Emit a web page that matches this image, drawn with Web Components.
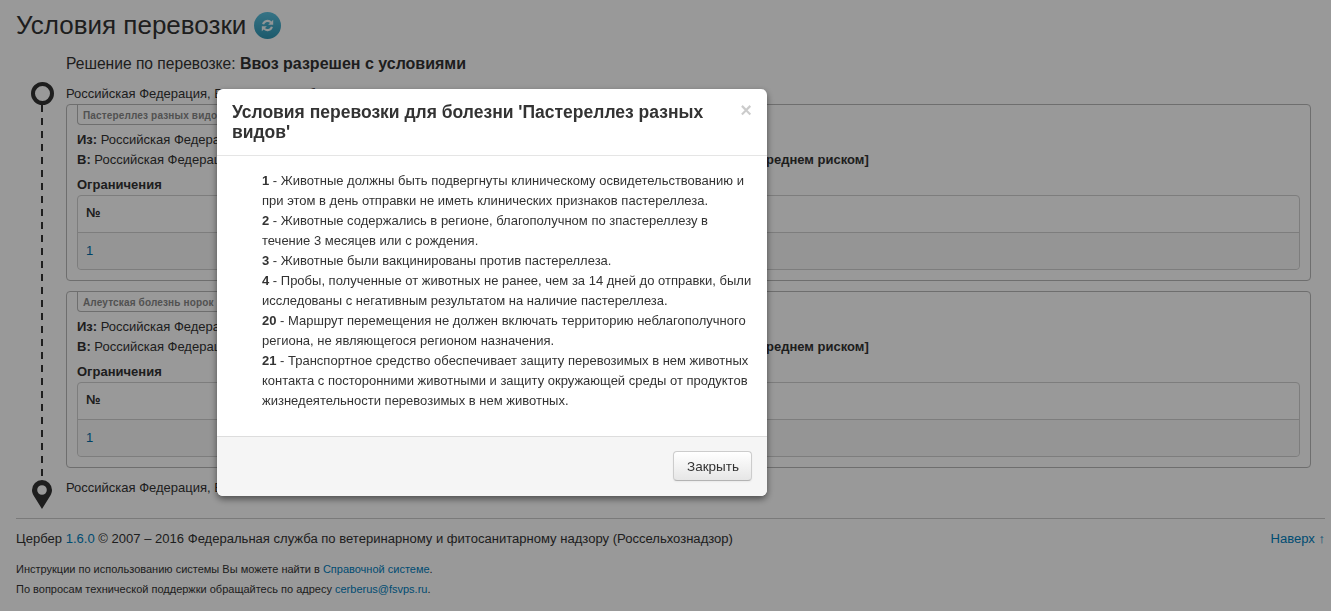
<!DOCTYPE html>
<html lang="ru">
<head>
<meta charset="utf-8">
<title>Условия перевозки</title>
<style>
  html, body { margin: 0; height: 100%; }
  body { font-family: "Liberation Sans", Arial, sans-serif; color: #333; background: #fff; overflow: hidden; }
  b { color: #333; }
  a { color: #0080c0; text-decoration: none; }
  route-decision b { font-size: 16px; }
</style>
</head>
<body>
<cerber-page>
  <page-title>Условия перевозки</page-title>
  <route-decision>Решение по перевозке: <b>Ввоз разрешен с условиями</b></route-decision>
  <route-timeline>
    <route-point slot="start">Российская Федерация, Белгородская область</route-point>
    <route-box title-text="Пастереллез разных видов" tail="реднем риском]"></route-box>
    <route-box title-text="Алеутская болезнь норок" tail="реднем риском]"></route-box>
    <route-point slot="end">Российская Федерация, Белгородская область</route-point>
  </route-timeline>
  <page-footer>
    <span>Цербер <a href="#">1.6.0</a> © 2007 – 2016 Федеральная служба по ветеринарному и фитосанитарному надзору (Россельхознадзор)</span>
    <a slot="top" href="#">Наверх ↑</a>
    <span slot="note">Инструкции по использованию системы Вы можете найти в <a href="#">Справочной системе</a>.</span>
    <span slot="note">По вопросам технической поддержки обращайтесь по адресу <a href="#">cerberus@fsvps.ru</a>.</span>
  </page-footer>
</cerber-page>
<modal-dialog>
  <span slot="title">Условия перевозки для болезни 'Пастереллез разных видов'</span>
  <condition-item><b>1</b> - Животные должны быть подвергнуты клиническому освидетельствованию и при этом в день отправки не иметь клинических признаков пастереллеза.</condition-item>
  <condition-item><b>2</b> - Животные содержались в регионе, благополучном по зпастереллезу в течение 3 месяцев или с рождения.</condition-item>
  <condition-item><b>3</b> - Животные были вакцинированы против пастереллеза.</condition-item>
  <condition-item><b>4</b> - Пробы, полученные от животных не ранее, чем за 14 дней до отправки, были исследованы с негативным результатом на наличие пастереллеза.</condition-item>
  <condition-item><b>20</b> - Маршрут перемещения не должен включать территорию неблагополучного региона, не являющегося регионом назначения.</condition-item>
  <condition-item><b>21</b> - Транспортное средство обеспечивает защиту перевозимых в нем животных контакта с посторонними животными и защиту окружающей среды от продуктов жизнедеятельности перевозимых в нем животных.</condition-item>
</modal-dialog>
<script>
  class CerberPage extends HTMLElement {
    constructor() {
      super();
      this.attachShadow({ mode: "open" }).innerHTML = `
        <style>
          :host { display: block; padding: 0 6px 0 16px; }
        </style>
        <slot></slot>`;
    }
  }

  class PageTitle extends HTMLElement {
    constructor() {
      super();
      this.attachShadow({ mode: "open" }).innerHTML = `
        <style>
          :host { display: flex; align-items: center; gap: 8px; height: 50px; font-size: 26px; color: #333; }
          .refresh { width: 27px; height: 27px; border-radius: 50%; background: linear-gradient(#5bc0de, #2f96b4); display: flex; align-items: center; justify-content: center; }
        </style>
        <span><slot></slot></span>
        <span class="refresh">
          <svg width="13" height="13" viewBox="0 0 16 16" fill="none" stroke="#f2f8fa" stroke-width="2.6">
            <path d="M2.6 6.6A5.6 5.6 0 0 1 12.4 4.4"/>
            <path d="M13.4 9.4A5.6 5.6 0 0 1 3.6 11.6"/>
            <path d="M15 1v6.200H8.800z" fill="#f2f8fa" stroke="none"/>
            <path d="M1 15V8.800h6.200z" fill="#f2f8fa" stroke="none"/>
          </svg>
        </span>`;
    }
  }

  class RouteDecision extends HTMLElement {
    constructor() {
      super();
      this.attachShadow({ mode: "open" }).innerHTML = `
        <style>
          :host { display: block; margin-left: 50px; font-size: 15.600px; line-height: 20px; height: 27px; padding-top: 4px; box-sizing: border-box; }
        </style>
        <slot></slot>`;
    }
  }

  class RouteTimeline extends HTMLElement {
    constructor() {
      super();
      this.attachShadow({ mode: "open" }).innerHTML = `
        <style>
          :host { display: grid; grid-template-columns: 50px 1fr; margin-top: 5px; }
          .rail { display: flex; flex-direction: column; align-items: center; padding-left: 2px; box-sizing: border-box; }
          .ring { width: 23px; height: 23px; box-sizing: border-box; border: 4px solid #333; border-radius: 50%; flex: none; }
          .line { flex: 1; width: 2px; background: repeating-linear-gradient(to bottom, #333 0 7px, transparent 7px 13px); }
          .pin { flex: none; display: block; }
          .content { display: flex; flex-direction: column; gap: 10px; margin-right: 14px; padding: 1px 0 12px; }
          ::slotted([slot="start"]) { margin-bottom: -9px; }
          ::slotted([slot="end"]) { margin-top: -1px; }
        </style>
        <div class="rail">
          <span class="ring"></span>
          <span class="line"></span>
          <svg class="pin" width="20" height="29" viewBox="0 0 20 29">
            <path fill-rule="evenodd" fill="#333" d="M10 0a10 10 0 0 1 10 10c0 2-.6 3.800-1.600 5.400L10 29 1.600 15.400C.6 13.800 0 12 0 10A10 10 0 0 1 10 0zm0 5.200a4.800 4.800 0 1 0 0 9.600 4.800 4.800 0 0 0 0-9.600z"/>
          </svg>
        </div>
        <div class="content">
          <slot name="start"></slot>
          <slot></slot>
          <slot name="end"></slot>
        </div>`;
    }
  }

  class RoutePoint extends HTMLElement {
    constructor() {
      super();
      this.attachShadow({ mode: "open" }).innerHTML = `
        <style>
          :host { display: block; font-size: 13px; line-height: 22px; height: 20px; white-space: nowrap; }
        </style>
        <slot></slot>`;
    }
  }

  const boxTemplate = document.createElement("template");
  boxTemplate.innerHTML = `
    <style>
      :host { display: block; height: 177px; box-sizing: border-box; border: 1px solid #b8b8b8; border-radius: 4px; padding: 0 10px; font-size: 13px; color: #333; }
      .legend { display: inline-block; height: 20px; box-sizing: border-box; border: 1px solid #b8b8b8; border-top: 0; border-radius: 0 0 4px 4px; padding: 0 5px; width: 300px; font-size: 10px; letter-spacing: .15px; font-weight: bold; line-height: 21px; color: #888; vertical-align: top; white-space: nowrap; overflow: hidden; }
      .line { line-height: 22px; height: 20px; white-space: nowrap; }
      .from { margin-top: 4px; }
      .tail { position: absolute; left: 766px; }
      h4 { margin: 5px 0 0; height: 20px; font-size: 13px; line-height: 22px; color: #333; font-weight: bold; }
      .table { margin-top: 1px; border: 1px solid #d0d0d0; border-radius: 4px; height: 75px; box-sizing: border-box; display: grid; grid-template-rows: 36px 1fr; }
      .cell { padding: 0 8px; display: flex; align-items: center; }
      .head { font-weight: bold; padding-bottom: 4px; }
      .row { border-top: 1px solid #d0d0d0; color: #006ea8; background: #f8f8f8; border-radius: 0 0 4px 4px; padding-bottom: 2px; }
    </style>
    <div class="legend"></div>
    <div class="line from"><b>Из:</b> Российская Федерация</div>
    <div class="line"><b>В:</b> Российская Федерация<b class="tail"></b></div>
    <h4>Ограничения</h4>
    <div class="table">
      <div class="cell head">№</div>
      <div class="cell row">1</div>
    </div>`;

  class RouteBox extends HTMLElement {
    constructor() {
      super();
      this.attachShadow({ mode: "open" }).appendChild(boxTemplate.content.cloneNode(true));
      this.shadowRoot.querySelector(".legend").textContent = this.getAttribute("title-text");
      this.shadowRoot.querySelector(".tail").textContent = this.getAttribute("tail");
    }
  }

  class PageFooter extends HTMLElement {
    constructor() {
      super();
      this.attachShadow({ mode: "open" }).innerHTML = `
        <style>
          :host { display: block; margin-top: 9px; border-top: 1px solid #ccc; font-size: 13.050px; }
          .main { display: flex; justify-content: space-between; line-height: 20px; padding-top: 10px; }
          .notes { display: flex; flex-direction: column; margin-top: 10px; font-size: 11px; line-height: 20px; }
        </style>
        <div class="main"><slot></slot><slot name="top"></slot></div>
        <div class="notes"><slot name="note"></slot></div>`;
    }
  }

  class ModalDialog extends HTMLElement {
    constructor() {
      super();
      this.attachShadow({ mode: "open" }).innerHTML = `
        <style>
          :host { position: fixed; inset: 0; background: rgba(0,0,0,.4); display: block; }
          .dialog { position: absolute; left: 217px; top: 89px; width: 550px; height: 407px; box-sizing: border-box; display: flex; flex-direction: column; background: #fff; border-radius: 6px; box-shadow: 0 3px 7px rgba(0,0,0,.5); overflow: hidden; }
          header { flex: none; height: 67px; box-sizing: border-box; border-bottom: 1px solid #e5e5e5; padding: 13px 50px 0 15px; position: relative; }
          h3 { margin: 0; font-size: 17.500px; line-height: 20px; font-weight: bold; color: #333; }
          .close { position: absolute; right: 15px; top: 11px; font-size: 20px; line-height: 20px; font-weight: bold; color: #000; opacity: .2; }
          .body { flex: 1; padding: 15px 15px 0 45px; font-size: 13px; line-height: 20px; color: #333; }
          footer { flex: none; height: 60px; box-sizing: border-box; background: #f5f5f5; border-top: 1px solid #ddd; padding: 14px 15px 0; display: flex; justify-content: flex-end; align-items: flex-start; }
          button { width: 79px; height: 30px; border: 1px solid #ccc; border-bottom-color: #b3b3b3; border-radius: 4px; background: linear-gradient(#fff, #e6e6e6); font: 13.500px "Liberation Sans", Arial, sans-serif; color: #333; box-shadow: inset 0 1px 0 rgba(255,255,255,.2), 0 1px 2px rgba(0,0,0,.05); padding: 0 0 0 1px; }
        </style>
        <div class="dialog">
          <header><h3><slot name="title"></slot></h3><span class="close">×</span></header>
          <div class="body"><slot></slot></div>
          <footer><button>Закрыть</button></footer>
        </div>`;
    }
  }

  class ConditionItem extends HTMLElement {
    constructor() {
      super();
      this.attachShadow({ mode: "open" }).innerHTML = `
        <style>
          :host { display: block; }
        </style>
        <slot></slot>`;
    }
  }

  customElements.define("cerber-page", CerberPage);
  customElements.define("page-title", PageTitle);
  customElements.define("route-decision", RouteDecision);
  customElements.define("route-timeline", RouteTimeline);
  customElements.define("route-point", RoutePoint);
  customElements.define("route-box", RouteBox);
  customElements.define("page-footer", PageFooter);
  customElements.define("modal-dialog", ModalDialog);
  customElements.define("condition-item", ConditionItem);
</script>
</body>
</html>
